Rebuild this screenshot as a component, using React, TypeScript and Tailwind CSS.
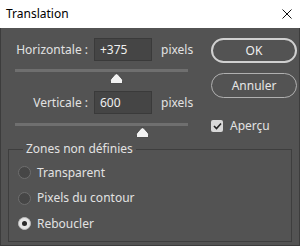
import React from "react";

const font = { fontFamily: '"Noto Sans", "Open Sans", sans-serif' };

function Thumb({ left, top }: { left: number; top: number }) {
  return (
    <svg
      width="13"
      height="11"
      viewBox="0 0 13 11"
      className="absolute"
      style={{ left, top }}
    >
      <path
        d="M6.5 0.7 Q7.3 0.7 8 1.5 L12 6 Q12.5 6.7 12.5 7.5 L12.5 10.5 L0.5 10.5 L0.5 7.5 Q0.5 6.7 1 6 L5 1.5 Q5.7 0.7 6.5 0.7Z"
        fill="#f2f2f2"
        stroke="#3a3a3a"
        strokeWidth="0.8"
      />
    </svg>
  );
}

function Radio({ checked, label }: { checked?: boolean; label: string }) {
  return (
    <div className="flex items-center h-[25.5px]">
      <div
        className={
          checked
            ? "w-[13px] h-[13px] rounded-full bg-[#e6e6e6] border border-[#bdbdbd] flex items-center justify-center"
            : "w-[13px] h-[13px] rounded-full bg-[#464646] border border-[#6e6e6e]"
        }
      >
        {checked && <div className="w-[5px] h-[5px] rounded-full bg-[#2a2a2a]" />}
      </div>
      <span className="ml-[6px] text-[12px] text-[#e2e2e2]">{label}</span>
    </div>
  );
}

export default function App() {
  return (
    <div className="w-[300px] h-[246px] flex flex-col bg-white select-none" style={font}>
      <div className="h-[28px] flex items-center justify-between pl-[6px] pr-[8px] shrink-0">
        <span className="text-[12px] text-black">Translation</span>
        <svg width="10" height="10" viewBox="0 0 10 10">
          <path d="M0.5 0.5 L9.5 9.5 M9.5 0.5 L0.5 9.5" stroke="#111" strokeWidth="1" />
        </svg>
      </div>
      <div className="flex-1 bg-[#535353] border border-t-0 border-[#3c3c3c] flex flex-col">
        <div className="flex pt-[10px]">
          <div className="w-[195px] flex flex-col">
            <div className="flex items-center h-[23px] text-[12px] text-[#e2e2e2]">
              <span className="w-[87px] text-right">Horizontale :</span>
              <div className="ml-[6px] w-[58px] h-[23px] bg-[#454545] border border-[#3a3a3a] flex items-center pl-[5px] text-[#f0f0f0]">
                +375
              </div>
              <span className="ml-[9px]">pixels</span>
            </div>
            <div className="relative h-[30px]">
              <div className="absolute left-[14px] w-[173px] top-[8px] h-[3px] bg-[#6f6f6f]" />
              <Thumb left={109} top={12} />
            </div>
            <div className="flex items-center h-[23px] text-[12px] text-[#e2e2e2]">
              <span className="w-[87px] text-right">Verticale :</span>
              <div className="ml-[6px] w-[58px] h-[23px] bg-[#454545] border border-[#3a3a3a] flex items-center pl-[5px] text-[#f0f0f0]">
                600
              </div>
              <span className="ml-[9px]">pixels</span>
            </div>
            <div className="relative h-[30px]">
              <div className="absolute left-[14px] w-[173px] top-[9px] h-[3px] bg-[#6f6f6f]" />
              <Thumb left={135} top={13} />
            </div>
          </div>
          <div className="ml-[15px] flex flex-col">
            <div className="w-[86px] h-[25px] rounded-full border-2 border-[#d0d0d0] flex items-center justify-center text-[12px] text-[#f0f0f0]">
              OK
            </div>
            <div className="mt-[10px] w-[86px] h-[25px] rounded-full border border-[#b0b0b0] flex items-center justify-center text-[12px] text-[#e6e6e6]">
              Annuler
            </div>
            <div className="mt-[19px] flex items-center">
              <div className="w-[12px] h-[12px] rounded-[2px] bg-[#d8d8d8] flex items-center justify-center">
                <svg width="9" height="8" viewBox="0 0 9 8">
                  <path d="M1 4 L3.5 6.5 L8 1.5" fill="none" stroke="#222" strokeWidth="1.6" />
                </svg>
              </div>
              <span className="ml-[7px] text-[12px] text-[#e2e2e2]">Aperçu</span>
            </div>
          </div>
        </div>
        <fieldset className="mx-[7px] mt-[-2px] mb-[3px] flex-1 border border-[#3e3e3e] pl-[9px] pt-[4px]">
          <legend className="ml-[5px] px-[3px] text-[12px] text-[#e2e2e2] leading-[14px]">
            Zones non définies
          </legend>
          <Radio label="Transparent" />
          <Radio label="Pixels du contour" />
          <Radio checked label="Reboucler" />
        </fieldset>
      </div>
    </div>
  );
}
